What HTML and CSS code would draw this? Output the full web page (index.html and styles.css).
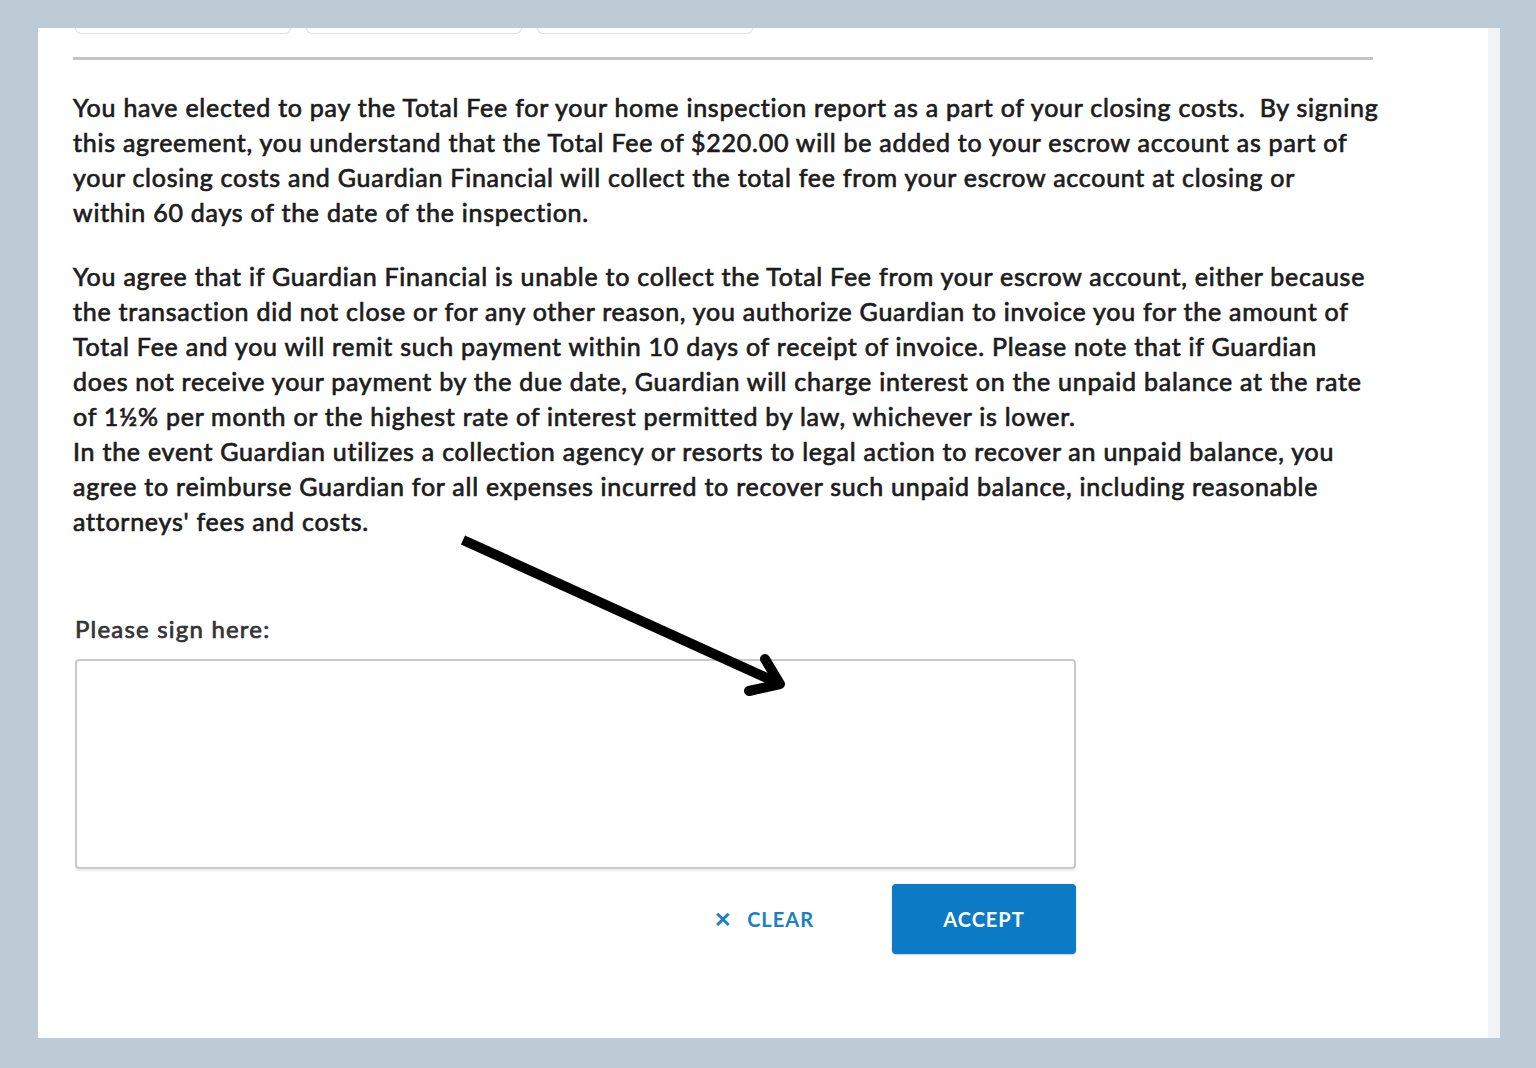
FILE: index.html
```html
<!DOCTYPE html>
<html lang="en">
    <head>
        <title>Inspection Fee Agreement</title>
        <meta charset="UTF-8">
        <link rel="stylesheet" href="styles.css">
    </head>
    <body>
        <div class="card">
            <div class="tabs">
                <div class="tab"></div><div class="tab"></div><div class="tab"></div>
            </div>
            <div class="rule"></div>
            <p class="terms">
                You have elected to pay the Total Fee for your home inspection report as a part of your closing costs.&nbsp; By signing<br>
                this agreement, you understand that the Total Fee of $220.00 will be added to your escrow account as part of<br>
                your closing costs and Guardian Financial will collect the total fee from your escrow account at closing or<br>
                within 60 days of the date of the inspection.
            </p>
            <p class="terms">
                You agree that if Guardian Financial is unable to collect the Total Fee from your escrow account, either because<br>
                the transaction did not close or for any other reason, you authorize Guardian to invoice you for the amount of<br>
                Total Fee and you will remit such payment within 10 days of receipt of invoice. Please note that if Guardian<br>
                does not receive your payment by the due date, Guardian will charge interest on the unpaid balance at the rate<br>
                of 1½% per month or the highest rate of interest permitted by law, whichever is lower.<br>
                In the event Guardian utilizes a collection agency or resorts to legal action to recover an unpaid balance, you<br>
                agree to reimburse Guardian for all expenses incurred to recover such unpaid balance, including reasonable<br>
                attorneys' fees and costs.
            </p>
            <div class="sign">
                <div class="sign-label">Please sign here:</div>
                <div class="sign-pad"></div>
                <div class="sign-actions">
                    <button class="btn-clear"><span class="x">&#x2715;</span>CLEAR</button>
                    <button class="btn-accept">ACCEPT</button>
                </div>
            </div>
            <svg class="pointer" width="1462" height="1010" viewBox="0 0 1462 1010">
                <line x1="425" y1="512" x2="740" y2="655" stroke="#000" stroke-width="10"/>
                <polyline points="727,631 742,656 711,663" fill="none" stroke="#000" stroke-width="10" stroke-linecap="round" stroke-linejoin="round"/>
            </svg>
        </div>
    </body>
</html>
```

FILE: styles.css
```css
body {
    background-color: #BCCBD6;
    margin: 0;
    padding: 28px 0 30px 38px;
    font-family: 'Lato', 'Open Sans', sans-serif;
    color: #1C1C1C;
}

.card {
    position: relative;
    width: 1462px;
    height: 1010px;
    box-sizing: border-box;
    padding: 0 0 0 35px;
    background-color: #FFFFFF;
    box-shadow: inset -12px 0 0 #F1F3F5;
}

.tabs {
    display: flex;
    gap: 15px;
    padding-left: 2px;
}

.tab {
    width: 214px;
    height: 5px;
    border: 1px solid #E2E2E2;
    border-top: none;
    border-radius: 0 0 7px 7px;
}

.rule {
    width: 1300px;
    height: 3px;
    margin-top: 23px;
    background-color: #C4C4C4;
}

.terms {
    margin: 30px 0 0 0;
    font-size: 25px;
    line-height: 35px;
    letter-spacing: 0.75px;
    white-space: nowrap;
    -webkit-text-stroke: 0.7px #1C1C1C;
}
.terms + .terms {
    margin-top: 29px;
}

.sign {
    width: 1001px;
    margin: 75px 0 0 2px;
}

.sign-label {
    font-size: 24px;
    line-height: 30px;
    letter-spacing: 1.2px;
    color: #333333;
    -webkit-text-stroke: 0.7px #333333;
}

.sign-pad {
    height: 206px;
    margin-top: 15px;
    border: 2px solid #CACACA;
    border-radius: 4px;
    box-shadow: 0 2px 2px rgba(0, 0, 0, 0.08);
}

.sign-actions {
    display: flex;
    justify-content: flex-end;
    align-items: center;
    gap: 54px;
    margin-top: 15px;
}

.btn-clear,
.btn-accept {
    font-family: 'Lato', sans-serif;
    font-size: 20px;
    font-weight: 700;
    letter-spacing: 1px;
    border: none;
    cursor: pointer;
}

.btn-clear {
    background: none;
    color: #1B80C4;
    padding: 0 24px;
    height: 70px;
}
.btn-clear .x {
    margin-right: 14px;
    font-size: 21px;
}

.btn-accept {
    width: 184px;
    height: 70px;
    background-color: #0B7BC6;
    color: #FFFFFF;
    border-radius: 4px;
    box-shadow: 0 1px 2px rgba(0, 0, 0, 0.2);
}

.pointer {
    position: absolute;
    left: 0;
    top: 0;
    pointer-events: none;
}
```
